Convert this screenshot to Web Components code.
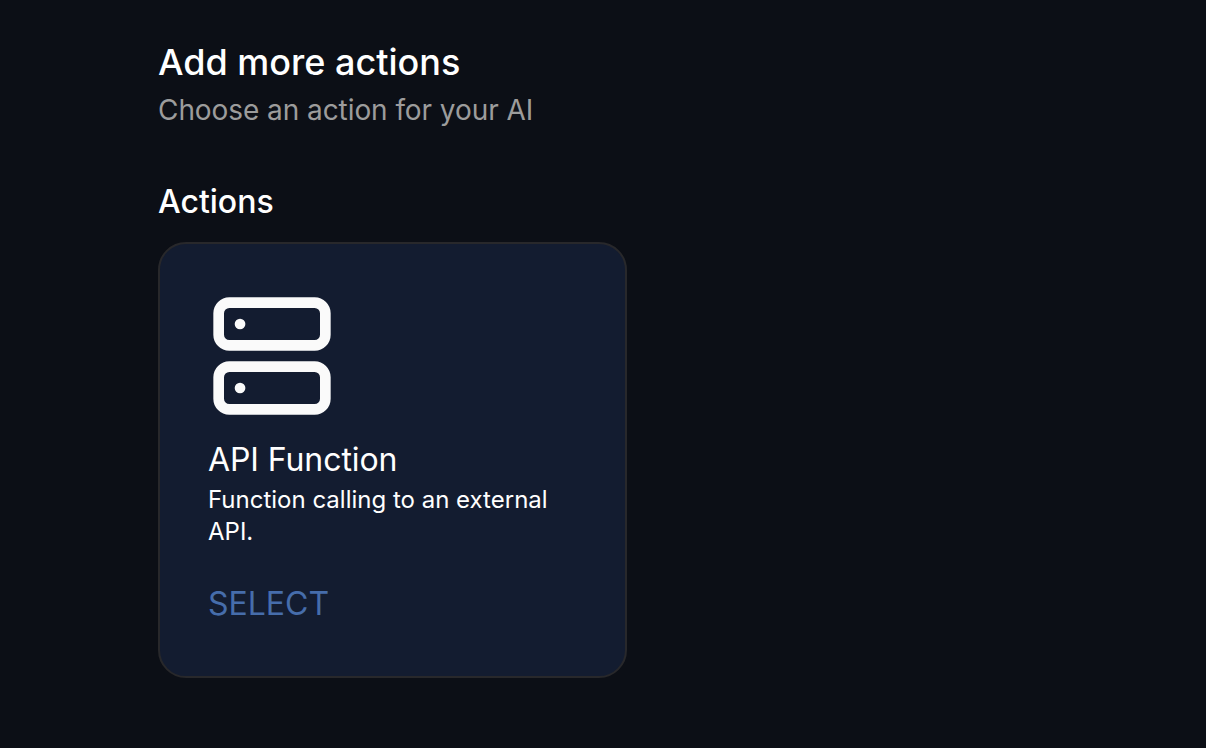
<!DOCTYPE html>
<html>
<head>
<meta charset="utf-8">
<style>
html, body { margin: 0; height: 100%; background: #0c0f16; overflow: hidden; }
body { font-family: "Inter", sans-serif; color: #fff; }
</style>
</head>
<body>
<action-page>
  <span slot="title">Add more actions</span>
  <span slot="subtitle">Choose an action for your AI</span>
  <span slot="section">Actions</span>
  <action-card>
    <span slot="name">API Function</span>
    <span slot="description">Function calling to an external API.</span>
    <span slot="action">SELECT</span>
  </action-card>
</action-page>
<script>
class ActionPage extends HTMLElement {
  constructor() {
    super();
    this.attachShadow({ mode: "open" });
  }

  connectedCallback() {
    this.shadowRoot.innerHTML = `
    <style>
:host { display: block; padding: 40px 0 0 158px; }
.title { font-size: 36px; line-height: 44px; font-weight: 500; }
.subtitle { margin-top: 8px; font-size: 28px; line-height: 36px; letter-spacing: -0.07px; color: #9c9c9c; }
.section { margin-top: 54px; font-size: 32px; line-height: 40px; font-weight: 500; }
.cards { margin-top: 20px; display: flex; }
    </style>
    <div class="title"><slot name="title"></slot></div>
    <div class="subtitle"><slot name="subtitle"></slot></div>
    <div class="section"><slot name="section"></slot></div>
    <div class="cards"><slot></slot></div>
    `;
  }
}

class ActionCard extends HTMLElement {
  constructor() {
    super();
    this.attachShadow({ mode: "open" });
  }

  connectedCallback() {
    this.shadowRoot.innerHTML = `
    <style>
:host {
  display: block;
  box-sizing: border-box;
  width: 469px;
  height: 436px;
  padding: 48px;
  background: #131c30;
  border: 2px solid #28282b;
  border-radius: 28px;
}
svg { display: block; width: 128px; height: 128px; }
.name { margin-top: 18px; font-size: 32px; line-height: 44px; letter-spacing: -0.08px; }
.description { margin-top: 2px; font-size: 24px; line-height: 32px; }
.action { margin-top: 34px; font-size: 32px; line-height: 44px; color: #466dab; }
    </style>
    <svg viewBox="0 0 24 24" fill="none" stroke="#fafafa" stroke-width="2" stroke-linecap="round" stroke-linejoin="round">
      <rect x="2" y="2" width="20" height="8" rx="2"></rect>
      <rect x="2" y="14" width="20" height="8" rx="2"></rect>
      <line x1="6" y1="6" x2="6.01" y2="6"></line>
      <line x1="6" y1="18" x2="6.01" y2="18"></line>
    </svg>
    <div class="name"><slot name="name"></slot></div>
    <div class="description"><slot name="description"></slot></div>
    <div class="action"><slot name="action"></slot></div>
    `;
  }
}

customElements.define("action-page", ActionPage);
customElements.define("action-card", ActionCard);
</script>
</body>
</html>
